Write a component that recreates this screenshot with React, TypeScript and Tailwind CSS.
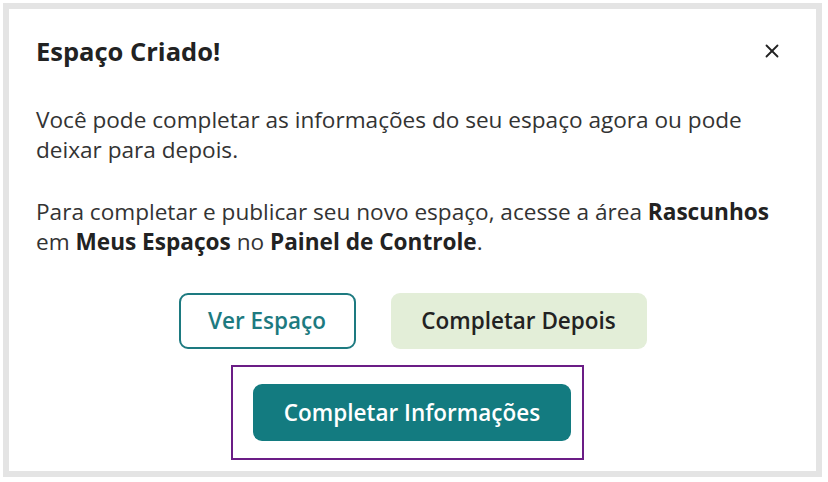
import { X } from 'lucide-react';

export default function App() {
  return (
    <div
      className="w-[828px] h-[482px] bg-white p-[3px] pb-[5px] pr-[6px]"
      style={{ fontFamily: '"Open Sans", "Noto Sans", sans-serif' }}
    >
      <div className="h-full border-[6px] border-[#e4e4e4] bg-white pl-[27px] pr-[27px] pt-[25px]">
        <div className="flex items-start justify-between">
          <h2 className="text-[25.5px] leading-[34px] font-bold text-[#222]">Espaço Criado!</h2>
          <button className="mt-[6px] mr-[6px] text-[#222]" aria-label="Fechar">
            <X size={22} strokeWidth={2} />
          </button>
        </div>

        <div className="mt-[37px] text-[22.6px] leading-[30px] text-[#333]">
          <p>
            Você pode completar as informações do seu espaço agora ou pode
            <br />
            deixar para depois.
          </p>
          <p className="mt-[32px]">
            Para completar e publicar seu novo espaço, acesse a área <strong className="font-bold text-[#222]">Rascunhos</strong>
            <br />
            em <strong className="font-bold text-[#222]">Meus Espaços</strong> no{' '}
            <strong className="font-bold text-[#222]">Painel de Controle</strong>.
          </p>
        </div>

        <div className="mt-[36px] flex flex-col items-center">
          <div className="flex gap-[35px]">
            <button className="h-[56px] w-[177px] rounded-[9px] border-2 border-[#1d7a80] text-[22.5px] font-semibold text-[#1d7a80]">
              Ver Espaço
            </button>
            <button className="h-[56px] w-[256px] rounded-[9px] bg-[#e3eed8] text-[22.5px] font-semibold text-[#222]">
              Completar Depois
            </button>
          </div>
          <div className="mt-[16px] ml-[-10px] border-2 border-[#6b1d86] pl-[20px] pr-[11px] py-[17px]">
            <button className="h-[57px] w-[318px] rounded-[9px] bg-[#137b80] text-[22.5px] font-semibold text-white">
              Completar Informações
            </button>
          </div>
        </div>
      </div>
    </div>
  );
}
